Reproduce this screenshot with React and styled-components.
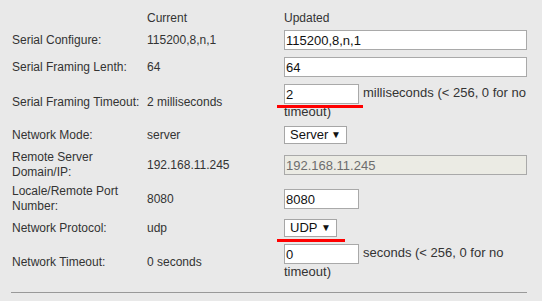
import React from "react";
import styled, { createGlobalStyle } from "styled-components";

const GlobalStyle = createGlobalStyle`
  body {
    margin: 0;
    background: #e9e9e9;
    font-family: "Liberation Sans", Arial, sans-serif;
    color: #333;
  }
`;

const Page = styled.div`
  padding: 8px 15px 0 12px;
  width: 515px;
`;

const Row = styled.div`
  display: grid;
  grid-template-columns: 135px 137px 243px;
  align-items: center;
  height: ${(props) => props.$h}px;
  font-size: 12px;
  line-height: 15px;
`;

const Label = styled.div`
  padding-right: 6px;
`;

const Current = styled.div``;

const Updated = styled.div`
  font-size: 13px;
  line-height: 16px;
`;

const Field = styled.span`
  position: relative;
  display: inline-block;
  vertical-align: middle;
  margin-right: 4px;
`;

const Input = styled.input`
  box-sizing: border-box;
  display: block;
  width: ${(props) => (props.$short ? 75 : 243)}px;
  height: 20px;
  margin: 0;
  padding: 0 1px;
  border: 1px solid #a9a9a9;
  background: #fff;
  font-family: "Liberation Sans", Arial, sans-serif;
  font-size: 13px;
  color: #111;
  outline: none;

  &:disabled {
    background: #ebebe4;
    color: #6d6d6d;
  }
`;

const Select = styled.span`
  box-sizing: border-box;
  display: flex;
  align-items: center;
  justify-content: space-between;
  width: ${(props) => props.$w}px;
  height: 18px;
  padding: 0 5px 0 5px;
  border: 1px solid #a6a6a6;
  background: #fff;
  color: #111;
  font-size: 13px;
`;

const Arrow = styled.span`
  font-size: 10px;
  color: #111;
`;

const Mark = styled.span`
  position: absolute;
  left: -7px;
  top: calc(100% + ${(props) => props.$gap}px);
  width: ${(props) => props.$w}px;
  height: 3px;
  background: #f00;
`;

const Note = styled.span`
  color: #333;
`;

const Rule = styled.hr`
  margin: 8px 0 0 -1px;
  width: 516px;
  border: 0;
  border-top: 1px solid #999;
`;

export default function App() {
  return (
    <Page>
      <GlobalStyle />
      <Row $h={20}>
        <Label />
        <Current>Current</Current>
        <Current>Updated</Current>
      </Row>
      <Row $h={24}>
        <Label>Serial Configure:</Label>
        <Current>115200,8,n,1</Current>
        <Updated>
          <Input defaultValue="115200,8,n,1" />
        </Updated>
      </Row>
      <Row $h={30}>
        <Label>Serial Framing Lenth:</Label>
        <Current>64</Current>
        <Updated>
          <Input defaultValue="64" />
        </Updated>
      </Row>
      <Row $h={40}>
        <Label>Serial Framing Timeout:</Label>
        <Current>2 milliseconds</Current>
        <Updated>
          <Field>
            <Input $short defaultValue="2" />
            <Mark $gap={1} $w={86} />
          </Field>
          <Note>milliseconds (&lt; 256, 0 for no timeout)</Note>
        </Updated>
      </Row>
      <Row $h={26}>
        <Label>Network Mode:</Label>
        <Current>server</Current>
        <Updated>
          <Field>
            <Select $w={63}>
              Server <Arrow>▼</Arrow>
            </Select>
          </Field>
        </Updated>
      </Row>
      <Row $h={34}>
        <Label>Remote Server Domain/IP:</Label>
        <Current>192.168.11.245</Current>
        <Updated>
          <Input disabled defaultValue="192.168.11.245" />
        </Updated>
      </Row>
      <Row $h={34}>
        <Label>Locale/Remote Port Number:</Label>
        <Current>8080</Current>
        <Updated>
          <Input $short defaultValue="8080" />
        </Updated>
      </Row>
      <Row $h={24}>
        <Label>Network Protocol:</Label>
        <Current>udp</Current>
        <Updated>
          <Field>
            <Select $w={53}>
              UDP <Arrow>▼</Arrow>
            </Select>
            <Mark $gap={2} $w={68} />
          </Field>
        </Updated>
      </Row>
      <Row $h={44}>
        <Label>Network Timeout:</Label>
        <Current>0 seconds</Current>
        <Updated>
          <Field>
            <Input $short defaultValue="0" />
          </Field>
          <Note>seconds (&lt; 256, 0 for no timeout)</Note>
        </Updated>
      </Row>
      <Rule />
    </Page>
  );
}
